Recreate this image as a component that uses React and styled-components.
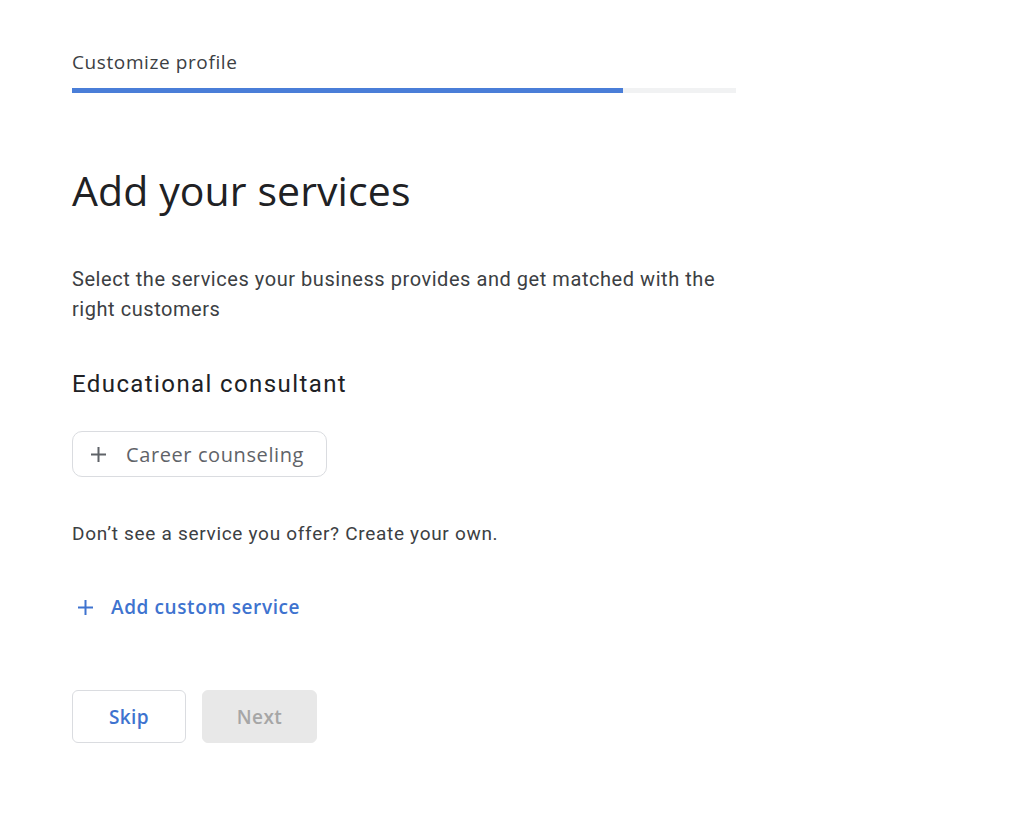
import React from "react";
import styled, { createGlobalStyle } from "styled-components";

const GlobalStyle = createGlobalStyle`
  body {
    margin: 0;
    background: #ffffff;
    font-family: Roboto, "Liberation Sans", sans-serif;
  }
`;

const Page = styled.div`
  width: 1024px;
  height: 819px;
  padding: 49px 0 0 72px;
  box-sizing: border-box;
`;

const Column = styled.div`
  width: 664px;
  display: flex;
  flex-direction: column;
`;

const StepLabel = styled.div`
  font-family: "Open Sans", sans-serif;
  font-size: 19px;
  letter-spacing: 0.6px;
  color: #3c4043;
  line-height: 26px;
`;

const Track = styled.div`
  margin-top: 13px;
  height: 5px;
  background: #f1f2f3;
`;

const Fill = styled.div`
  height: 100%;
  background: #4a7ed8;
`;

const Title = styled.h1`
  margin: 71px 0 0;
  font-family: "Open Sans", sans-serif;
  font-weight: 400;
  font-size: 41px;
  letter-spacing: 0.1px;
  line-height: 52px;
  color: #202124;
`;

const Lead = styled.p`
  margin: 48px 0 0;
  font-size: 20px;
  letter-spacing: 0.55px;
  line-height: 30px;
  color: #3c4043;
`;

const Category = styled.h2`
  margin: 44px 0 0;
  font-weight: 400;
  font-size: 24px;
  letter-spacing: 1.4px;
  line-height: 32px;
  color: #202124;
`;

const Chip = styled.button`
  margin-top: 31px;
  align-self: flex-start;
  height: 46px;
  padding: 0 22px 0 17px;
  display: flex;
  align-items: center;
  gap: 19px;
  border: 1px solid #dadce0;
  border-radius: 10px;
  background: #fff;
  font-family: "Open Sans", sans-serif;
  font-size: 20px;
  letter-spacing: 0.6px;
  color: #5f6368;
`;

const Note = styled.p`
  margin: 45px 0 0;
  font-size: 19px;
  letter-spacing: 0.7px;
  line-height: 24px;
  color: #3c4043;
`;

const AddLink = styled.button`
  margin-top: 48px;
  align-self: flex-start;
  padding: 0 0 0 5px;
  display: flex;
  align-items: center;
  gap: 17px;
  border: none;
  background: none;
  font-family: "Open Sans", sans-serif;
  font-size: 19px;
  font-weight: 600;
  letter-spacing: 0.6px;
  color: #3e73cf;
`;

const Actions = styled.div`
  margin-top: 70px;
  display: flex;
  gap: 16px;
`;

const ActionButton = styled.button`
  width: ${(p) => (p.$primary ? "115px" : "114px")};
  height: 53px;
  border-radius: 6px;
  border: 1px solid ${(p) => (p.$primary ? "#e8e8e8" : "#dadce0")};
  background: ${(p) => (p.$primary ? "#e8e8e8" : "#fff")};
  color: ${(p) => (p.$primary ? "#a6a6a6" : "#3e73cf")};
  font-family: "Open Sans", sans-serif;
  font-size: 19px;
  font-weight: 600;
  letter-spacing: 0.4px;
`;

const Plus = ({ color }) => (
  <svg width="17" height="17" viewBox="0 0 17 17">
    <path d="M8.5 1v15M1 8.5h15" stroke={color} strokeWidth="2" fill="none" />
  </svg>
);

export default function App() {
  return (
    <>
      <GlobalStyle />
      <Page>
        <Column>
          <StepLabel>Customize profile</StepLabel>
          <Track>
            <Fill style={{ width: "83%" }} />
          </Track>
          <Title>Add your services</Title>
          <Lead>
            Select the services your business provides and get matched with the
            right customers
          </Lead>
          <Category>Educational consultant</Category>
          <Chip>
            <Plus color="#5f6368" />
            Career counseling
          </Chip>
          <Note>Don’t see a service you offer? Create your own.</Note>
          <AddLink>
            <Plus color="#3e73cf" />
            Add custom service
          </AddLink>
          <Actions>
            <ActionButton>Skip</ActionButton>
            <ActionButton $primary disabled>
              Next
            </ActionButton>
          </Actions>
        </Column>
      </Page>
    </>
  );
}
